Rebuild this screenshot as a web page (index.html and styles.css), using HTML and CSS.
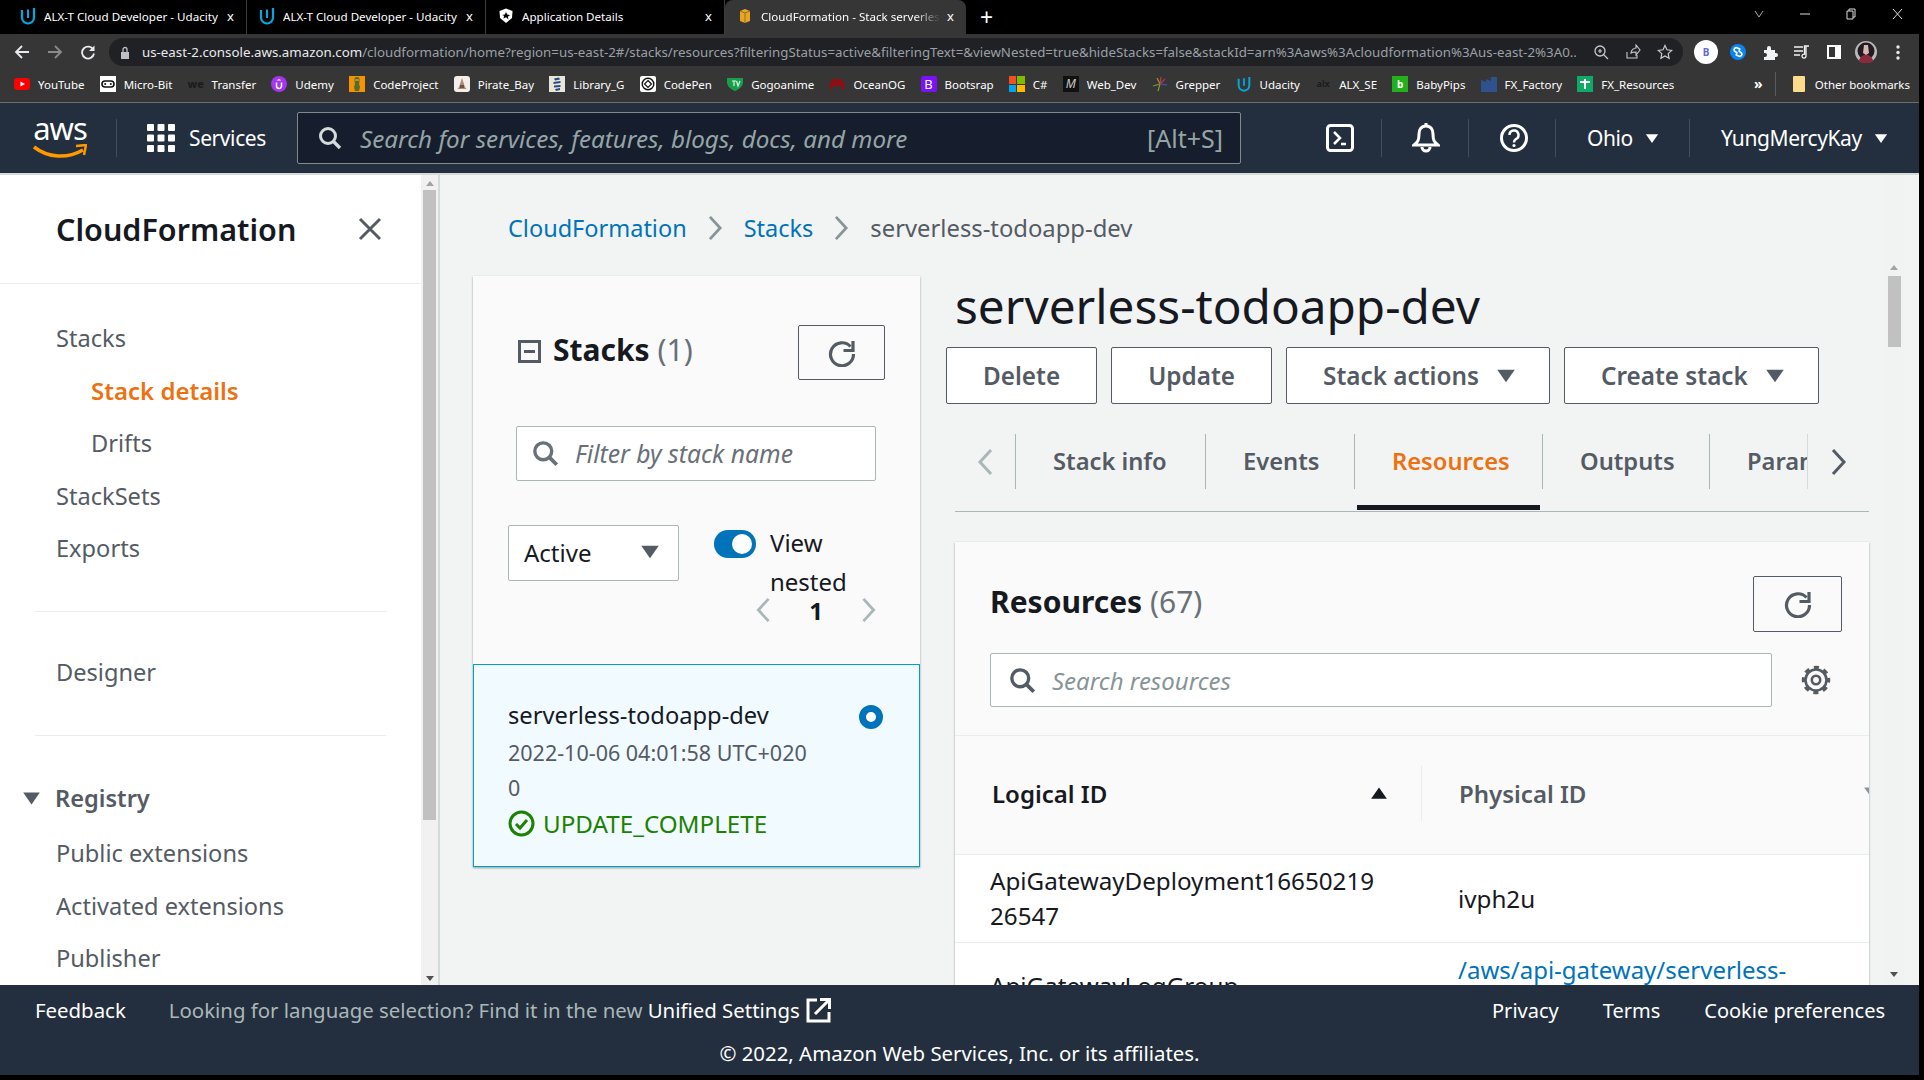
FILE: index.html
```html
<!DOCTYPE html>
<html lang="en">
<head>
<meta charset="UTF-8">
<meta name="viewport" content="width=device-width, initial-scale=1.0">
<title>CloudFormation - Stack serverless-todoapp-dev</title>
<link rel="stylesheet" href="styles.css">
</head>
<body>
  <svg class="defs" width="0" height="0">
    <symbol id="udacity" viewBox="0 0 16 18"><path d="M2 3v7.500c0 3.500 2.700 6 6 6s6-2.500 6-6V1" fill="none" stroke="#02a9dc" stroke-width="2.200"/><path d="M8 2.500V11" fill="none" stroke="#02a9dc" stroke-width="2"/></symbol>
    <symbol id="search" viewBox="0 0 24 24"><circle cx="10" cy="10" r="7.500" fill="none" stroke="currentColor" stroke-width="3"/><path d="M15.500 15.500L22 22" stroke="currentColor" stroke-width="3.400"/></symbol>
    <symbol id="refresh" viewBox="0 0 28 28"><path d="M22.500 7.500A11.500 11.500 0 1 0 25.500 15" fill="none" stroke="currentColor" stroke-width="3.200"/><path d="M25 2v9.500h-9.500" fill="none" stroke="currentColor" stroke-width="3.200"/></symbol>
    <symbol id="tri-down" viewBox="0 0 16 12"><path d="M1 1h14L8 11z" fill="currentColor"/></symbol>
    <symbol id="chev-left" viewBox="0 0 16 28"><path d="M14 2L3 14l11 12" fill="none" stroke="currentColor" stroke-width="3"/></symbol>
    <symbol id="chev-right" viewBox="0 0 16 28"><path d="M2 2l11 12L2 26" fill="none" stroke="currentColor" stroke-width="3"/></symbol>
  </svg>

  <div class="page">
    <!-- browser chrome -->
    <div class="tabstrip">
      <div class="tab-chrome">
        <svg class="fav"><use href="#udacity"/></svg><span class="tab-title">ALX-T Cloud Developer - Udacity</span><span class="tab-x">x</span>
      </div>
      <div class="tab-chrome">
        <svg class="fav"><use href="#udacity"/></svg><span class="tab-title">ALX-T Cloud Developer - Udacity</span><span class="tab-x">x</span>
      </div>
      <div class="tab-chrome">
        <svg class="fav" viewBox="0 0 16 16"><path d="M8 .5l6.500 2.500-.5 7-6 5-6-5-.5-7z" fill="#fff"/><path d="M8 4l1.200 2.600 2.800.3-2.100 1.900.6 2.800L8 9.200l-2.500 1.400.6-2.800L4 6.900l2.800-.3z" fill="#000"/></svg><span class="tab-title">Application Details</span><span class="tab-x">x</span>
      </div>
      <div class="tab-chrome tab-chrome-active">
        <svg class="fav" viewBox="0 0 16 16"><path d="M3 3l5-2 5 2v10l-5 2-5-2z" fill="#e7a526"/><path d="M8 5v10M3 3l5 2 5-2" fill="none" stroke="#8a5f10" stroke-width=".8"/></svg><span class="tab-title tab-title-fade">CloudFormation - Stack serverless-todoapp-dev</span><span class="tab-x">x</span>
      </div>
      <span class="tab-plus">+</span>
      <div class="win-controls">
        <svg class="win-v" width="10" height="8" viewBox="0 0 10 8"><path d="M1 1l4 6 4-6" fill="none" stroke="#aaa"/></svg>
        <svg class="win-min" width="10" height="10" viewBox="0 0 10 10"><path d="M0 5h10" stroke="#ddd"/></svg>
        <svg class="win-max" width="10" height="12" viewBox="0 0 10 12"><path d="M1 3h6v8H1zM3 3V1h6v8H7" fill="none" stroke="#ddd"/></svg>
        <svg class="win-close" width="11" height="12" viewBox="0 0 11 12"><path d="M1 1l9 10M10 1L1 11" stroke="#ddd"/></svg>
      </div>
    </div>

    <div class="toolbar">
      <svg class="tool-btn" width="16" height="16" viewBox="0 0 16 16"><path d="M15 8H2M8 2L2 8l6 6" fill="none" stroke="#e8eaed" stroke-width="1.800"/></svg>
      <svg class="tool-btn" width="16" height="16" viewBox="0 0 16 16"><path d="M1 8h13M8 2l6 6-6 6" fill="none" stroke="#8a8b8c" stroke-width="1.800"/></svg>
      <svg class="tool-btn" width="16" height="16" viewBox="0 0 16 16"><path d="M13.500 6A6 6 0 1 0 14 9.500" fill="none" stroke="#e8eaed" stroke-width="1.800"/><path d="M14.500 1.500v5.500H9z" fill="#e8eaed"/></svg>
      <div class="omnibox">
        <svg class="lock" width="10" height="13" viewBox="0 0 10 13"><path d="M1 6h8v7H1z" fill="#bdc1c6"/><path d="M3 6V3.500a2 2 0 0 1 4 0V6" fill="none" stroke="#bdc1c6" stroke-width="1.300"/></svg>
        <span class="url"><span class="url-host">us-east-2.console.aws.amazon.com</span>/cloudformation/home?region=us-east-2#/stacks/resources?filteringStatus=active&amp;filteringText=&amp;viewNested=true&amp;hideStacks=false&amp;stackId=arn%3Aaws%3Acloudformation%3Aus-east-2%3A0...</span>
        <svg class="omni-icon" width="16" height="16" viewBox="0 0 16 16"><circle cx="7" cy="7" r="5" fill="none" stroke="#c8cacd" stroke-width="1.300"/><path d="M10.500 10.500L15 15M5 7h4M7 5v4" stroke="#c8cacd" stroke-width="1.200"/></svg>
        <svg class="omni-icon" width="16" height="16" viewBox="0 0 16 16"><path d="M2 8v6h10v-3M6 9c0-3 3-5 5-5V1l4 5-4 5V8c-2 0-4 0-5 1z" fill="none" stroke="#c8cacd" stroke-width="1.100"/></svg>
        <svg class="omni-icon" width="16" height="16" viewBox="0 0 16 16"><path d="M8 1.500l2 4.300 4.700.6-3.500 3.200.9 4.700L8 12l-4.100 2.300.9-4.700L1.300 6.400 6 5.800z" fill="none" stroke="#c8cacd" stroke-width="1.200"/></svg>
      </div>
      <div class="ext-row">
        <span class="ext-b">B</span>
        <svg width="16" height="16" viewBox="0 0 16 16"><circle cx="8" cy="8" r="8" fill="#0a84f0"/><path d="M10.500 5.500L7 3.800C5 3 3.200 5.200 4.500 7l3 2.500M5.500 10.500L9 12.200c2 .8 3.800-1.400 2.500-3.200l-3-2.500" fill="none" stroke="#fff" stroke-width="1.700"/></svg>
        <svg width="15" height="15" viewBox="0 0 15 15"><path d="M1 5h3V3a2 2 0 0 1 4 0v2h4v3h1a2 2 0 0 1 0 4h-1v3H1v-3h1a2 2 0 0 0 0-4H1z" fill="#f1f3f4"/></svg>
        <svg width="16" height="14" viewBox="0 0 16 14"><path d="M0 2h9M0 6h9M0 10h6" stroke="#f1f3f4" stroke-width="1.500"/><path d="M12 1v10a2 2 0 1 1-1.500-1.800V1H15" fill="none" stroke="#f1f3f4" stroke-width="1.300"/></svg>
        <svg width="14" height="14" viewBox="0 0 14 14"><path d="M1 1h12v12H1z" fill="none" stroke="#fff" stroke-width="2"/><path d="M8 1h5v12H8z" fill="#fff"/></svg>
        <svg width="22" height="22" viewBox="0 0 22 22"><circle cx="11" cy="11" r="11" fill="#b9b9b9"/><circle cx="11" cy="10" r="8.500" fill="#221c22"/><path d="M9 4h4l1 8-3 2-3-2z" fill="#d8b7ae"/><path d="M4 20c1-5 4-6 7-6s6 1 7 6a11 11 0 0 1-14 0z" fill="#8c2a3c"/></svg>
        <svg width="4" height="15" viewBox="0 0 4 15"><circle cx="2" cy="2" r="1.700" fill="#e8eaed"/><circle cx="2" cy="7.500" r="1.700" fill="#e8eaed"/><circle cx="2" cy="13" r="1.700" fill="#e8eaed"/></svg>
      </div>
    </div>

    <div class="bookmarks">
      <span class="bm"><svg class="bm-icon" viewBox="0 0 16 16"><rect y="2" width="16" height="12" rx="3" fill="#f00"/><path d="M6.500 5.500v5L11 8z" fill="#fff"/></svg>YouTube</span>
      <span class="bm"><svg class="bm-icon" viewBox="0 0 16 16"><rect width="16" height="16" fill="#fff"/><rect x="2" y="5" width="12" height="6" rx="3" fill="none" stroke="#111" stroke-width="1.600"/><circle cx="5.200" cy="8" r="1" fill="#111"/><circle cx="10.800" cy="8" r="1" fill="#111"/></svg>Micro-Bit</span>
      <span class="bm"><i class="bm-icon bm-we">we</i>Transfer</span>
      <span class="bm"><svg class="bm-icon" viewBox="0 0 16 16"><circle cx="8" cy="8" r="8" fill="#a435f0"/><path d="M5.500 6.500V10a2.500 2.500 0 0 0 5 0V6.500" fill="none" stroke="#fff" stroke-width="1.500"/><path d="M8 3L5.500 4.500h5z" fill="#fff"/></svg>Udemy</span>
      <span class="bm"><svg class="bm-icon" viewBox="0 0 16 16"><rect width="16" height="16" fill="#f59300"/><path d="M8 1c2 0 3 1.500 2.500 4L10 8l1 3-1 4H6l-1-4 1-3-.5-3C5 2.500 6 1 8 1z" fill="#556b2f"/><circle cx="7" cy="4" r=".8" fill="#cfd8a0"/><circle cx="9" cy="4" r=".8" fill="#cfd8a0"/></svg>CodeProject</span>
      <span class="bm"><svg class="bm-icon" viewBox="0 0 16 16"><rect width="16" height="16" rx="3" fill="#f3eeea"/><path d="M8 2l1 3 2 6 1.500 2h-9L5 11l2-6z" fill="#a88c7c"/><path d="M6 9h4v3H6z" fill="#6e5143"/></svg>Pirate_Bay</span>
      <span class="bm"><svg class="bm-icon" viewBox="0 0 16 16"><rect width="16" height="16" fill="#e9e6d8"/><path d="M5 2.500l5-1 1 2-5 1zM4.500 6l7-1v2l-7 1zM5 9.500l6.500-.5v2l-6.500.5zM6 13l5-1v2l-4 1z" fill="#23488c"/></svg>Library_G</span>
      <span class="bm"><svg class="bm-icon" viewBox="0 0 16 16"><rect width="16" height="16" rx="2" fill="#fff"/><circle cx="8" cy="8" r="5.800" fill="none" stroke="#111" stroke-width="1.400"/><path d="M8 4.500L11.500 8 8 11.500 4.500 8z" fill="none" stroke="#111" stroke-width="1.200"/></svg>CodePen</span>
      <span class="bm"><svg class="bm-icon" viewBox="0 0 16 16"><path d="M0 2h16v4c0 4-3 7-8 9-5-2-8-5-8-9z" fill="#17a04c"/><path d="M5 5h4M7 5v5M9.500 5L11 10l2-5" fill="none" stroke="#d7f5dd" stroke-width="1.200"/></svg>Gogoanime</span>
      <span class="bm"><svg class="bm-icon" viewBox="0 0 16 16"><path d="M4 3h8c2 0 3.500 6 3.500 9 0 2-2 2-3 0l-1-2h-7l-1 2c-1 2-3 2-3 0 0-3 1.500-9 3.500-9z" fill="#8c0f16"/></svg>OceanOG</span>
      <span class="bm"><i class="bm-icon bm-bs">B</i>Bootsrap</span>
      <span class="bm"><i class="bm-icon bm-ms"><b></b><b></b><b></b><b></b></i>C#</span>
      <span class="bm"><i class="bm-icon bm-med">M</i>Web_Dev</span>
      <span class="bm"><svg class="bm-icon" viewBox="0 0 16 16"><path d="M8 8L6 15" stroke="#7a9a2e" stroke-width="1.300"/><path d="M8 8L1 10" stroke="#7a9a2e" stroke-width="1.300"/><path d="M8 8l1-7" stroke="#c0392b" stroke-width="1.300"/><path d="M8 8L5 2" stroke="#b0892e" stroke-width="1.300"/><path d="M8 8l7 1" stroke="#4a4a9a" stroke-width="1.300"/><path d="M8 8l5-5" stroke="#a33a6b" stroke-width="1.300"/></svg>Grepper</span>
      <span class="bm"><svg class="bm-icon"><use href="#udacity"/></svg>Udacity</span>
      <span class="bm"><i class="bm-icon bm-alx">alx</i>ALX_SE</span>
      <span class="bm"><i class="bm-icon bm-baby">b</i>BabyPips</span>
      <span class="bm"><svg class="bm-icon" viewBox="0 0 16 16"><path d="M0 4l5 2V3l5 2V1h6v15H0z" fill="#2f528f"/></svg>FX_Factory</span>
      <span class="bm"><svg class="bm-icon" viewBox="0 0 16 16"><rect width="16" height="16" fill="#0fa968"/><path d="M3 6h10M8 3v10" stroke="#fff" stroke-width="2"/></svg>FX_Resources</span>
      <span class="bm-more">»</span>
      <span class="bm bm-other"><i class="bm-icon bm-folder"></i>Other bookmarks</span>
    </div>

    <!-- aws console nav -->
    <nav class="topnav">
      <div class="aws-logo">
        <span class="aws-word">aws</span>
        <svg width="54" height="18" viewBox="0 0 54 18"><path d="M1 3c14 11 33 12 49 3" fill="none" stroke="#f90" stroke-width="3.500"/><path d="M43 2l10-1-2 10" fill="none" stroke="#f90" stroke-width="2.500"/></svg>
      </div>
      <div class="services">
        <svg width="28" height="28" viewBox="0 0 28 28" fill="#fff"><rect width="7" height="7" rx="1"/><rect x="10.500" width="7" height="7" rx="1"/><rect x="21" width="7" height="7" rx="1"/><rect y="10.500" width="7" height="7" rx="1"/><rect x="10.500" y="10.500" width="7" height="7" rx="1"/><rect x="21" y="10.500" width="7" height="7" rx="1"/><rect y="21" width="7" height="7" rx="1"/><rect x="10.500" y="21" width="7" height="7" rx="1"/><rect x="21" y="21" width="7" height="7" rx="1"/></svg>
        <span>Services</span>
      </div>
      <div class="nav-search">
        <svg class="nav-search-icon"><use href="#search"/></svg>
        <span class="nav-search-text">Search for services, features, blogs, docs, and more</span>
        <span class="nav-search-key">[Alt+S]</span>
      </div>
      <div class="nav-item nav-shell">
        <svg width="28" height="28" viewBox="0 0 28 28"><rect x="1.500" y="1.500" width="25" height="25" rx="3" fill="none" stroke="#fff" stroke-width="3"/><path d="M8 8l6 6-6 6M15 20h5" fill="none" stroke="#fff" stroke-width="2.500"/></svg>
      </div>
      <div class="nav-item nav-bell">
        <svg width="28" height="30" viewBox="0 0 28 30"><path d="M14 3c-5 0-7 4-7 8 0 6-1 8-5 11h24c-4-3-5-5-5-11 0-4-2-8-7-8z" fill="none" stroke="#fff" stroke-width="3"/><path d="M14 0v3M10 24a4 4 0 0 0 8 0" fill="none" stroke="#fff" stroke-width="3"/></svg>
      </div>
      <div class="nav-item nav-help">
        <svg width="28" height="28" viewBox="0 0 28 28"><circle cx="14" cy="14" r="12.500" fill="none" stroke="#fff" stroke-width="3"/><path d="M9.500 11a4.500 4.500 0 1 1 6.500 4c-1.500 1-2 1.500-2 3.500" fill="none" stroke="#fff" stroke-width="2.500"/><circle cx="14" cy="21.500" r="1.600" fill="#fff"/></svg>
      </div>
      <div class="nav-item nav-region">
        <span>Ohio</span><svg class="nav-tri"><use href="#tri-down"/></svg>
      </div>
      <div class="nav-item nav-user">
        <span>YungMercyKay</span><svg class="nav-tri"><use href="#tri-down"/></svg>
      </div>
    </nav>

    <div class="workspace">
      <aside class="sidebar">
        <div class="side-scrollarea">
          <div class="side-head">
            <h2>CloudFormation</h2>
            <svg width="24" height="24" viewBox="0 0 24 24"><path d="M2 2l20 20M22 2L2 22" stroke="#545b64" stroke-width="3"/></svg>
          </div>
          <ul class="side-list">
            <li>Stacks</li>
            <li class="indent active-link">Stack details</li>
            <li class="indent">Drifts</li>
            <li>StackSets</li>
            <li>Exports</li>
          </ul>
          <div class="side-rule"></div>
          <ul class="side-list side-list-single">
            <li>Designer</li>
          </ul>
          <div class="side-rule side-rule-b"></div>
          <div class="side-group"><svg><use href="#tri-down"/></svg>Registry</div>
          <ul class="side-list side-list-reg">
            <li>Public extensions</li>
            <li>Activated extensions</li>
            <li>Publisher</li>
          </ul>
        </div>
        <div class="scrollbar side-bar">
          <i class="sb-up"></i>
          <div class="sb-thumb"></div>
          <i class="sb-down"></i>
        </div>
      </aside>

      <main class="main">
        <div class="main-inner">
          <div class="crumbs">
            <a>CloudFormation</a>
            <svg class="crumb-chev"><use href="#chev-right"/></svg>
            <a>Stacks</a>
            <svg class="crumb-chev"><use href="#chev-right"/></svg>
            <span class="crumb-current">serverless-todoapp-dev</span>
          </div>

          <div class="split">
            <section class="stacks-panel">
              <div class="stacks-head">
                <h2 class="panel-title">
                  <svg class="collapse-icon" width="23" height="23" viewBox="0 0 23 23"><rect x="1.500" y="1.500" width="20" height="20" fill="none" stroke="#545b64" stroke-width="3"/><path d="M6 11.500h11" stroke="#545b64" stroke-width="3"/></svg>
                  <span>Stacks <span class="count">(1)</span></span>
                </h2>
                <button class="icon-btn stacks-refresh"><svg><use href="#refresh"/></svg></button>
              </div>
              <div class="input filter-input">
                <svg><use href="#search"/></svg>
                <span>Filter by stack name</span>
              </div>
              <div class="filter-row">
                <div class="select">Active<svg><use href="#tri-down"/></svg></div>
                <div class="nested">
                  <span class="toggle"><i></i></span>
                  <span class="nested-text">View nested</span>
                </div>
              </div>
              <div class="pager">
                <svg><use href="#chev-left"/></svg>
                <b>1</b>
                <svg><use href="#chev-right"/></svg>
              </div>
              <div class="stack-item">
                <div class="stack-name"><span>serverless-todoapp-dev</span><i class="radio"></i></div>
                <div class="stack-date">2022-10-06 04:01:58 UTC+0200</div>
                <div class="stack-status">
                  <svg width="27" height="27" viewBox="0 0 27 27"><circle cx="13.500" cy="13.500" r="11.500" fill="none" stroke="#1d8102" stroke-width="3"/><path d="M8 14l4 4 7-8" fill="none" stroke="#1d8102" stroke-width="3"/></svg>
                  UPDATE_COMPLETE
                </div>
              </div>
            </section>

            <section class="detail">
              <h1>serverless-todoapp-dev</h1>
              <div class="actions">
                <button class="btn">Delete</button>
                <button class="btn">Update</button>
                <button class="btn">Stack actions<svg><use href="#tri-down"/></svg></button>
                <button class="btn">Create stack<svg><use href="#tri-down"/></svg></button>
              </div>
              <div class="tabs">
                <div class="tab-arrow tab-arrow-left"><svg><use href="#chev-left"/></svg></div>
                <div class="tab tab-info"><span>Stack info</span></div>
                <div class="tab tab-events"><span>Events</span></div>
                <div class="tab tab-resources active"><span>Resources</span></div>
                <div class="tab tab-outputs"><span>Outputs</span></div>
                <div class="tab tab-params"><span>Parameters</span></div>
                <div class="tab-arrow tab-arrow-right"><svg><use href="#chev-right"/></svg></div>
              </div>

              <div class="resources">
                <div class="res-head">
                  <h2 class="panel-title"><span>Resources <span class="count">(67)</span></span></h2>
                  <button class="icon-btn res-refresh"><svg><use href="#refresh"/></svg></button>
                </div>
                <div class="res-search">
                  <div class="input search-input">
                    <svg><use href="#search"/></svg>
                    <span>Search resources</span>
                  </div>
                  <svg class="gear" width="30" height="30" viewBox="0 0 30 30"><circle cx="15" cy="15" r="10.500" fill="none" stroke="#545b64" stroke-width="2.600"/><circle cx="15" cy="15" r="12.500" fill="none" stroke="#545b64" stroke-width="3.500" stroke-dasharray="5 4.820" stroke-dashoffset="2.500"/><circle cx="15" cy="15" r="4.200" fill="none" stroke="#545b64" stroke-width="2.600"/></svg>
                </div>
                <div class="res-table">
                  <div class="th th-sorted">
                    <span class="th-cell">Logical ID<svg><use href="#tri-down"/></svg></span>
                  </div>
                  <div class="th th-second">
                    <span>Physical ID</span><svg><use href="#tri-down"/></svg>
                  </div>
                  <div class="td td-first">ApiGatewayDeployment1665021926547</div>
                  <div class="td td-second">ivph2u</div>
                  <div class="td td-first td-last">ApiGatewayLogGroup</div>
                  <div class="td td-second td-last"><a>/aws/api-gateway/serverless-todoapp-dev</a></div>
                </div>
              </div>
            </section>
          </div>
        </div>
        <div class="scrollbar main-bar">
          <i class="sb-up"></i>
          <div class="sb-thumb"></div>
          <i class="sb-down"></i>
        </div>
      </main>
    </div>

    <footer class="footer">
      <div class="foot-row">
        <span class="foot-link foot-feedback">Feedback</span>
        <span class="foot-lang">Looking for language selection? Find it in the new <span class="foot-link">Unified Settings</span></span>
        <svg class="foot-ext" width="26" height="26" viewBox="0 0 26 26"><path d="M11 3H2v21h21v-9" fill="none" stroke="#fff" stroke-width="3"/><path d="M9 17L22 4M14 2.500h9.500V12" fill="none" stroke="#fff" stroke-width="3"/></svg>
        <span class="foot-right">
          <span class="foot-link">Privacy</span>
          <span class="foot-link">Terms</span>
          <span class="foot-link">Cookie preferences</span>
        </span>
      </div>
      <div class="foot-copy">© 2022, Amazon Web Services, Inc. or its affiliates.</div>
    </footer>
  </div>
</body>
</html>
```

FILE: styles.css
```css
* {
  box-sizing: border-box;
}

body {
  margin: 0;
  background: #000;
  font-family: "Noto Sans", sans-serif;
  overflow: hidden;
}

.defs {
  display: block;
  height: 0;
}

.page {
  width: 1919px;
  height: 1075px;
  display: flex;
  flex-direction: column;
  overflow: hidden;
}

h1, h2, ul {
  margin: 0;
  padding: 0;
  list-style: none;
}

button {
  font-family: inherit;
  cursor: pointer;
}

/* browser tabs */
.tabstrip {
  height: 34px;
  background: #000;
  display: flex;
  padding-left: 8px;
  color: #fff;
  font-size: 11.600px;
  flex: none;
}

.tab-chrome {
  width: 239px;
  height: 34px;
  display: flex;
  align-items: center;
  padding: 0 12px 2px 12px;
  border-right: 1px solid #3c3c3c;
}

.tab-chrome-active {
  background: #363636;
  border-right: 0;
  border-radius: 8px 8px 0 0;
  width: 241px;
}

.fav {
  width: 16px;
  height: 18px;
  flex: none;
  margin-right: 8px;
}

.tab-title {
  flex: 1;
  overflow: hidden;
  white-space: nowrap;
}

.tab-title-fade {
  -webkit-mask-image: linear-gradient(90deg, #000 85%, transparent);
  mask-image: linear-gradient(90deg, #000 85%, transparent);
}

.tab-x {
  font-size: 13px;
  flex: none;
  margin-left: 6px;
}

.tab-plus {
  color: #fff;
  font-size: 23px;
  line-height: 34px;
  margin-left: 14px;
}

.win-controls {
  margin-left: auto;
  display: flex;
  align-items: center;
  padding: 0 16px 6px 0;
  gap: 36px;
}

/* address bar */
.toolbar {
  height: 34px;
  background: #363636;
  display: flex;
  align-items: center;
  padding: 2px 0 0 14px;
  flex: none;
}

.tool-btn {
  margin-right: 17px;
}

.omnibox {
  width: 1574px;
  height: 28px;
  margin-left: -4px;
  background: #202124;
  border-radius: 14px;
  display: flex;
  align-items: center;
  padding: 0 10px 0 11px;
  gap: 16px;
  color: #9aa0a6;
  font-size: 13.300px;
}

.lock {
  margin-right: -4px;
  flex: none;
}

.url {
  flex: 1;
  white-space: nowrap;
  overflow: hidden;
}

.url-host {
  color: #e8eaed;
}

.omni-icon {
  flex: none;
}

.ext-row {
  display: grid;
  grid-auto-flow: column;
  grid-auto-columns: 32px;
  align-items: center;
  justify-items: center;
  margin-left: 7px;
}

.ext-b {
  width: 24px;
  height: 24px;
  border-radius: 50%;
  background: #fff;
  color: #5f6ad4;
  font-size: 10px;
  font-weight: bold;
  text-align: center;
  line-height: 24px;
}

.bookmarks {
  height: 35px;
  background: #363636;
  border-bottom: 1px solid #6d6d6d;
  display: flex;
  align-items: center;
  padding: 0 9px 2px 14px;
  gap: 15.200px;
  color: #fff;
  font-size: 11.500px;
  flex: none;
}

.bm {
  display: flex;
  align-items: center;
  gap: 8px;
  white-space: nowrap;
}

.bm-icon {
  width: 16px;
  height: 16px;
  display: block;
  flex: none;
  font-style: normal;
  font-size: 10px;
  font-weight: bold;
  line-height: 16px;
  text-align: center;
}

.bm-we { color: #1c1c1c; font-size: 11px; font-weight: 800; }
.bm-bs { background: #7a12f5; color: #fff; font-size: 13px; font-weight: normal; border-radius: 2px; }
.bm-ms { display: grid; grid-template-columns: 1fr 1fr; gap: 1px; }
.bm-ms b:nth-child(1) { background: #f25022; }
.bm-ms b:nth-child(2) { background: #7fba00; }
.bm-ms b:nth-child(3) { background: #00a4ef; }
.bm-ms b:nth-child(4) { background: #ffb900; }
.bm-med { background: #111; color: #ccc; font-style: italic; font-weight: normal; font-size: 12px; }
.bm-alx { color: #1c1c1c; font-size: 9px; }
.bm-baby { background: #23b01d; color: #fff; }
.bm-folder { background: #fbdc8c; border-radius: 1px; width: 12px; margin: 0 2px; }

.bm-more {
  margin-left: auto;
  font-size: 14px;
  font-weight: bold;
  padding-right: 12px;
  border-right: 1px solid #5b5b5b;
  line-height: 24px;
}

/* aws nav */
.topnav {
  height: 72px;
  background: #232f3e;
  border-bottom: 2px solid #d5dbdb;
  display: flex;
  align-items: center;
  color: #fff;
  flex: none;
  padding-left: 32px;
  font-size: 21px;
  letter-spacing: -.4px;
}

.aws-logo {
  width: 56px;
  display: flex;
  flex-direction: column;
  align-items: center;
  margin-right: 28px;
  line-height: 1;
  padding-top: 2px;
}

.aws-word {
  font-size: 31px;
  height: 28px;
  line-height: 24px;
  letter-spacing: -1px;
}

.services {
  display: flex;
  align-items: center;
  gap: 14px;
  border-left: 1px solid #414e5f;
  height: 38px;
  padding-left: 30px;
  width: 181px;
  flex: none;
}

.nav-search {
  width: 944px;
  height: 52px;
  background: #161e2d;
  border: 1px solid #7f8c8d;
  border-radius: 2px;
  display: flex;
  align-items: center;
  padding: 0 17px 0 20px;
  color: #b8c2c2;
  flex: none;
  letter-spacing: 0;
}

.nav-search-icon {
  width: 24px;
  height: 24px;
  color: #d5dbdb;
  margin-right: 18px;
}

.nav-search-text {
  flex: 1;
  font-style: italic;
  color: #95a5a6;
  font-size: 24.200px;
}

.nav-search-key {
  color: #95a5a6;
  font-size: 25px;
}

.nav-item {
  height: 38px;
  display: flex;
  align-items: center;
  gap: 12px;
  border-right: 1px solid #414e5f;
  flex: none;
}

.nav-shell {
  margin-left: 85px;
  width: 56px;
}

.nav-bell {
  width: 87px;
  padding-left: 30px;
}

.nav-help {
  width: 87px;
  padding-left: 31px;
}

.nav-region {
  width: 134px;
  padding-left: 31px;
}

.nav-user {
  border-right: 0;
  padding-left: 31px;
}

.nav-tri {
  width: 14px;
  height: 11px;
}

/* layout below the nav */
.workspace {
  height: 810px;
  display: flex;
  flex: none;
}

.sidebar {
  width: 440px;
  flex: none;
  background: #fff;
  border-right: 2px solid #d5dbdb;
  display: flex;
}

.side-scrollarea {
  width: 421px;
  overflow: hidden;
}

.side-head {
  height: 109px;
  padding: 0 39px 0 56px;
  display: flex;
  align-items: center;
  justify-content: space-between;
  border-bottom: 1px solid #eaeded;
}

.side-head h2 {
  font-size: 30.500px;
  font-weight: 600;
  color: #16191f;
}

.side-list li {
  height: 52.500px;
  line-height: 52.500px;
  padding-left: 56px;
  font-size: 23.600px;
  color: #545b64;
}

.side-list {
  padding-top: 28px;
}

.side-list li.indent {
  padding-left: 91px;
}

.side-list li.active-link {
  color: #ec7211;
  font-weight: 600;
  font-size: 24px;
}

.side-rule {
  height: 1px;
  background: #eaeded;
  margin: 36px 35px 0;
}

.side-list-single {
  padding-top: 34px;
}

.side-rule-b {
  margin-top: 37px;
}

.side-group {
  margin-top: 36px;
  padding-left: 22px;
  font-size: 23.600px;
  font-weight: 600;
  line-height: 52px;
  color: #545b64;
  display: flex;
  align-items: center;
}

.side-group svg {
  width: 19px;
  height: 15px;
  margin-right: 14px;
}

.side-list-reg {
  padding-top: 3px;
}

.scrollbar {
  display: flex;
  flex-direction: column;
  align-items: center;
  flex: none;
}

.side-bar {
  width: 17px;
  background: #f1f1f1;
}

.sb-up, .sb-down {
  display: block;
  width: 0;
  height: 0;
  border-left: 4px solid transparent;
  border-right: 4px solid transparent;
  flex: none;
}

.sb-up {
  border-bottom: 5px solid #a3a3a3;
  margin: 6px 0 4px;
}

.sb-down {
  border-top: 5px solid #505050;
  margin: 4px 0 4px;
}

.sb-thumb {
  width: 13px;
  background: #c1c1c1;
}

.side-bar .sb-thumb {
  height: 630px;
  margin-bottom: auto;
}

.main-bar {
  width: 20px;
  margin-right: 15px;
  background: #f1f3f3;
}

.main-bar .sb-up {
  margin-top: 90px;
  margin-bottom: 6px;
}

.main-bar .sb-thumb {
  height: 71px;
  margin-bottom: auto;
}

.main-bar .sb-down {
  margin-bottom: 8px;
}

/* main column */
.main {
  flex: 1;
  min-width: 0;
  background: #f2f3f3;
  display: flex;
}

.main-inner {
  flex: 1;
  min-width: 0;
  height: 810px;
  overflow: hidden;
  padding: 33px 15px 0 33px;
}

.crumbs {
  height: 40px;
  margin: 0 0 28px 35px;
  display: flex;
  align-items: center;
  font-size: 23.500px;
  color: #545b64;
}

.crumbs a {
  color: #0073bb;
}

.crumb-current {
  font-size: 23.800px;
}

.crumb-chev {
  width: 15px;
  height: 26px;
  color: #879596;
  margin: 0 21px;
}

.split {
  display: flex;
  gap: 35px;
  align-items: flex-start;
}

.stacks-panel {
  width: 447px;
  flex: none;
  background: #fafafa;
  box-shadow: 0 1px 2px rgba(0, 28, 36, .4);
}

.stacks-head {
  padding: 49px 35px 0 45px;
  display: flex;
  justify-content: space-between;
  align-items: flex-start;
}

.panel-title {
  font-size: 30px;
  font-weight: 700;
  color: #16191f;
  display: flex;
  align-items: center;
  line-height: 48px;
  white-space: nowrap;
}

.stacks-head .panel-title {
  margin-top: 1px;
}

.count {
  font-weight: 400;
  color: #687078;
}

.collapse-icon {
  margin-right: 12px;
  margin-top: 3px;
}

.icon-btn {
  background: #fff0;
  border: 1px solid #545b64;
  border-radius: 2px;
  color: #545b64;
  padding: 0;
  display: flex;
  align-items: center;
  justify-content: center;
  flex: none;
}

.icon-btn svg {
  width: 28px;
  height: 28px;
}

.stacks-refresh {
  width: 87px;
  height: 55px;
}

.input {
  background: #fff;
  border: 1px solid #aab7b8;
  border-radius: 2px;
  display: flex;
  align-items: center;
  color: #687078;
  font-style: italic;
  font-size: 24.700px;
}

.input svg {
  width: 27px;
  height: 27px;
  flex: none;
}

.filter-input {
  width: 360px;
  height: 55px;
  margin: 46px 0 0 43px;
  padding-left: 15px;
  gap: 16px;
}

.filter-row {
  display: flex;
  padding-left: 35px;
  margin-top: 44px;
  align-items: flex-start;
}

.select {
  width: 171px;
  height: 56px;
  background: #fff;
  border: 1px solid #aab7b8;
  border-radius: 2px;
  display: flex;
  align-items: center;
  justify-content: space-between;
  padding: 0 18px 2px 15px;
  font-size: 24px;
  color: #16191f;
}

.select svg {
  width: 20px;
  height: 16px;
  color: #545b64;
}

.nested {
  display: flex;
  margin-left: 35px;
  align-items: flex-start;
}

.toggle {
  width: 42px;
  height: 28px;
  margin-top: 5px;
  background: #0073bb;
  border-radius: 14px;
  padding: 4px;
  display: flex;
  justify-content: flex-end;
}

.toggle i {
  width: 20px;
  height: 20px;
  background: #fff;
  border-radius: 50%;
}

.nested-text {
  width: 90px;
  margin: -2px 0 -1px 14px;
  font-size: 24px;
  line-height: 39px;
  color: #16191f;
}

.pager {
  margin: -6px 0 0 282px;
  width: 122px;
  height: 32px;
  display: flex;
  align-items: center;
  justify-content: space-between;
  color: #aab7b8;
}

.pager svg {
  width: 16px;
  height: 26px;
}

.pager b {
  color: #16191f;
  font-size: 24px;
  font-weight: 700;
}

.stack-item {
  margin-top: 38px;
  height: 203px;
  background: #f1faff;
  border: 1px solid #00a1c9;
  padding: 32px 30px 0 34px;
}

.stack-name {
  display: flex;
  justify-content: space-between;
  align-items: center;
  height: 36px;
  font-size: 23.700px;
  color: #16191f;
}

.radio {
  width: 24px;
  height: 24px;
  border-radius: 50%;
  background: #fff;
  border: 7px solid #0073bb;
  margin-top: 4px;
  margin-right: 6px;
}

.stack-date {
  width: 308px;
  margin-top: 3px;
  font-size: 21.500px;
  line-height: 34.500px;
  color: #545b64;
  word-break: break-all;
}

.stack-status {
  display: flex;
  align-items: center;
  gap: 8px;
  height: 36px;
  font-size: 24.200px;
  color: #1d8102;
}

/* right column */
.detail {
  width: 914px;
  flex: none;
}

.detail h1 {
  height: 60px;
  font-size: 47.700px;
  font-weight: 400;
  line-height: 60px;
  color: #16191f;
  white-space: nowrap;
}

.actions {
  display: flex;
  gap: 14px;
  margin: 11px 0 0 -9px;
}

.btn {
  height: 57px;
  padding: 0 36px;
  background: #fff;
  border: 1px solid #545b64;
  border-radius: 2px;
  color: #545b64;
  font-size: 24.300px;
  font-weight: 600;
  display: flex;
  align-items: center;
  white-space: nowrap;
}

.btn svg {
  width: 20px;
  height: 16px;
  margin: 0 -3px 0 17px;
}

.tabs {
  display: flex;
  height: 78px;
  margin-top: 30px;
  padding-bottom: 2px;
  border-bottom: 1px solid #aab7b8;
  align-items: flex-start;
}

.tab-arrow {
  height: 55px;
  display: flex;
  align-items: center;
  justify-content: center;
  flex: none;
}

.tab-arrow-left {
  width: 60px;
  color: #aab7b8;
}

.tab-arrow-right {
  width: 62px;
  color: #545b64;
  border-left: 1px solid #d5dbdb;
}

.tab-arrow svg {
  width: 16px;
  height: 28px;
}

.tab {
  height: 76px;
  flex: none;
  overflow: hidden;
}

.tab span {
  display: block;
  height: 55px;
  line-height: 55px;
  padding-left: 37px;
  border-left: 1px solid #aab7b8;
  font-size: 23.700px;
  font-weight: 600;
  color: #545b64;
  white-space: nowrap;
}

.tab-info { width: 190px; }
.tab-events { width: 149px; }
.tab-resources { width: 188px; }
.tab-outputs { width: 167px; }
.tab-params { width: 98px; }

.tab.active span {
  color: #ec7211;
}

.tab.active::after {
  content: "";
  display: block;
  height: 5px;
  margin: 16px 2px 0 3px;
  background: #16191f;
}

.resources {
  margin-top: 30px;
  background: #fff;
  box-shadow: 0 1px 2px rgba(0, 28, 36, .4);
}

.res-head {
  background: #fafafa;
  padding: 34px 27px 0 35px;
  display: flex;
  justify-content: space-between;
  align-items: flex-start;
}

.res-head .panel-title {
  margin-top: 2px;
}

.res-refresh {
  width: 89px;
  height: 56px;
}

.res-search {
  background: #fafafa;
  padding: 21px 0 28px 35px;
  display: flex;
  align-items: center;
}

.search-input {
  width: 782px;
  height: 54px;
  padding-left: 18px;
  gap: 16px;
  color: #879596;
  font-size: 24px;
}

.search-input svg {
  color: #545b64;
}

.gear {
  margin-left: 29px;
}

.res-table {
  display: grid;
  grid-template-columns: 467px 447px;
  overflow: hidden;
}

.th {
  height: 120px;
  background: #fafafa;
  border-top: 1px solid #eaeded;
  border-bottom: 1px solid #eaeded;
  display: flex;
  align-items: center;
  font-size: 24px;
  font-weight: 600;
  padding-bottom: 4px;
}

.th svg {
  width: 18px;
  height: 14px;
  flex: none;
}

.th-sorted {
  padding-left: 37px;
  color: #16191f;
}

.th-cell {
  width: 431px;
  height: 55px;
  display: flex;
  align-items: center;
  justify-content: space-between;
  border-right: 1px solid #eaeded;
  padding-right: 33px;
}

.th-cell svg {
  transform: rotate(180deg);
}

.th-second {
  padding-left: 37px;
  color: #545b64;
  justify-content: space-between;
}

.th-second svg {
  color: #879596;
  margin-right: -12px;
}

.td {
  height: 88px;
  border-bottom: 1px solid #eaeded;
  display: flex;
  align-items: center;
  font-size: 24.200px;
  line-height: 35px;
  color: #16191f;
  word-break: break-all;
}

.td-first {
  padding: 0 40px 2px 35px;
}

.td-second {
  padding: 0 50px 0 36px;
}

.td a {
  color: #0073bb;
  word-break: normal;
  font-size: 24px;
}

/* footer */
.footer {
  height: 90px;
  background: #232f3e;
  flex: none;
  color: #d5dbdb;
  font-size: 20.400px;
  padding-top: 8px;
}

.foot-row {
  display: flex;
  align-items: center;
  height: 34px;
  padding: 0 34px 0 35px;
}

.foot-link {
  color: #fff;
}

.foot-feedback {
  margin-right: 43px;
}

.foot-lang {
  color: #aab7b8;
}

.foot-ext {
  margin-left: 6px;
}

.foot-right {
  margin-left: auto;
  display: flex;
  gap: 44px;
  font-size: 20px;
}

.foot-copy {
  margin-top: 9px;
  text-align: center;
  line-height: 34px;
  color: #fff;
}
```
